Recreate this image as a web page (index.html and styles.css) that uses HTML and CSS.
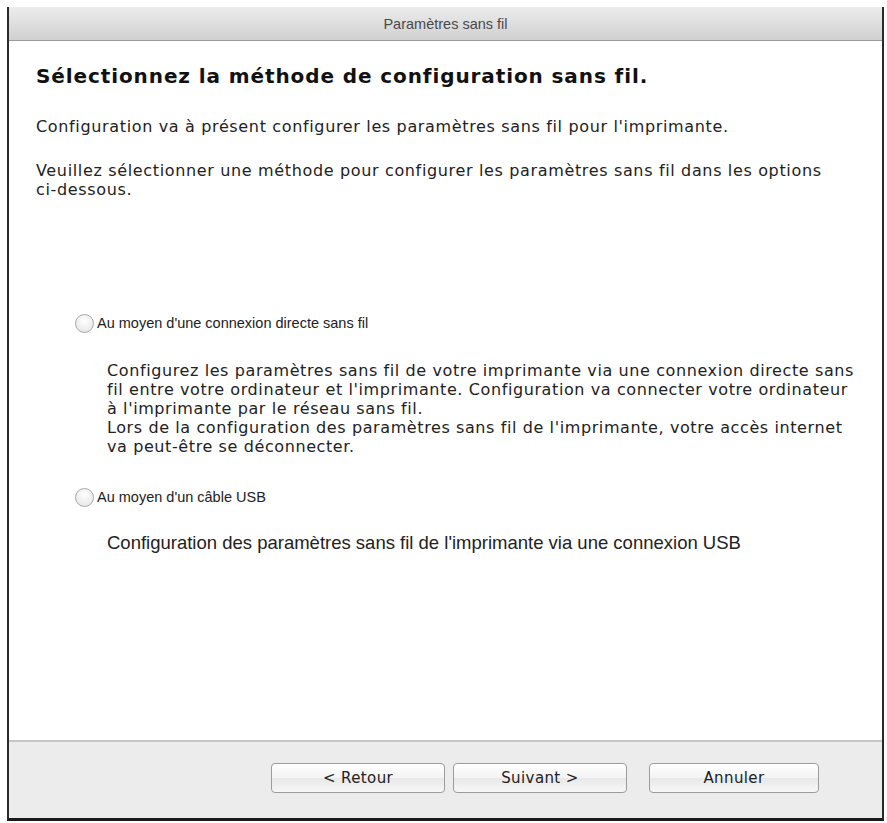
FILE: index.html
```html
<!DOCTYPE html>
<html lang="fr">
<head>
<meta charset="utf-8">
<title>Paramètres sans fil</title>
<link rel="stylesheet" href="styles.css">
</head>
<body>
<div class="window">
  <div class="titlebar">Paramètres sans fil</div>
  <div class="content">
    <h1 class="heading">Sélectionnez la méthode de configuration sans fil.</h1>
    <p class="intro">Configuration va à présent configurer les paramètres sans fil pour l'imprimante.</p>
    <p class="intro second">Veuillez sélectionner une méthode pour configurer les paramètres sans fil dans les options <span class="nowrap">ci-dessous.</span></p>
    <div class="options">
      <div class="option">
        <label class="radio-row"><span class="radio"></span><span class="radio-label">Au moyen d'une connexion directe sans fil</span></label>
        <p class="desc">Configurez les paramètres sans fil de votre imprimante via une connexion directe sans fil entre votre ordinateur et l'imprimante. Configuration va connecter votre ordinateur à l'imprimante par le réseau sans fil.<br>Lors de la configuration des paramètres sans fil de l'imprimante, votre accès internet va peut-être se déconnecter.</p>
      </div>
      <div class="option">
        <label class="radio-row"><span class="radio"></span><span class="radio-label">Au moyen d'un câble USB</span></label>
        <p class="desc narrow">Configuration des paramètres sans fil de l'imprimante via une connexion USB</p>
      </div>
    </div>
  </div>
  <div class="footer">
    <button class="btn">&lt; Retour</button>
    <button class="btn">Suivant &gt;</button>
    <button class="btn cancel">Annuler</button>
  </div>
</div>
</body>
</html>
```
FILE: styles.css
```css
html, body {
  margin: 0;
  padding: 0;
  background: #ffffff;
}
body {
  font-family: "DejaVu Sans", "Liberation Sans", sans-serif;
  color: #222;
}
.nowrap {
  white-space: nowrap;
}
.window {
  margin: 7px 3px 0 7px;
  height: 814px;
  box-sizing: border-box;
  border-left: 2px solid #2a2a2a;
  border-right: 2px solid #2a2a2a;
  border-bottom: 3px solid #1a1a1a;
  display: flex;
  flex-direction: column;
  background: #fff;
}
.titlebar {
  height: 33px;
  flex: none;
  background: linear-gradient(#ececec, #d0d0d0);
  border-bottom: 1px solid #9a9a9a;
  display: flex;
  align-items: center;
  justify-content: center;
  font-family: "Liberation Sans", sans-serif;
  font-size: 14.5px;
  color: #4a4a4a;
}
.content {
  flex: 1;
  padding: 23px 24px 0 27px;
}
.heading {
  margin: 0;
  font-size: 20px;
  letter-spacing: 0.9px;
  font-weight: bold;
  color: #111;
  line-height: 24px;
}
.intro {
  margin: 29px 0 0;
  font-size: 16px;
  letter-spacing: 0.65px;
  line-height: 19px;
  color: #222;
}
.intro.second {
  margin-top: 25px;
}
.options {
  margin-top: 114px;
  padding-left: 39px;
}
.option + .option {
  margin-top: 31px;
}
.radio-row {
  display: flex;
  align-items: center;
  height: 20px;
  gap: 3px;
}
.radio {
  width: 19px;
  height: 19px;
  border-radius: 50%;
  border: 1px solid #a8a8a8;
  background: radial-gradient(circle at 50% 35%, #ffffff, #e2e2e2);
  box-sizing: border-box;
}
.radio-label {
  font-family: "Liberation Sans", sans-serif;
  font-size: 14.5px;
  color: #222;
}
.desc {
  margin: 28px 0 0 32px;
  font-size: 16px;
  letter-spacing: 0.6px;
  line-height: 19px;
  color: #222;
}
.desc.narrow {
  margin-top: 26px;
  font-family: "Liberation Sans", sans-serif;
  font-size: 18.5px;
  letter-spacing: 0;
  line-height: 20px;
}
.footer {
  height: 78px;
  flex: none;
  background: #ececec;
  border-top: 2px solid #c6c6c6;
  display: flex;
  align-items: flex-start;
  padding: 21px 0 0 262px;
  box-sizing: border-box;
  gap: 8px;
}
.btn {
  width: 174px;
  height: 30px;
  border: 1px solid #9c9c9c;
  border-radius: 4px;
  background: linear-gradient(#ffffff, #f3f3f3 50%, #e8e8e8 51%, #f7f7f7);
  font-family: "DejaVu Sans", sans-serif;
  font-size: 15px;
  letter-spacing: 0.4px;
  color: #222;
  padding: 0;
}
.btn.cancel {
  margin-left: 14px;
  width: 170px;
}
```
